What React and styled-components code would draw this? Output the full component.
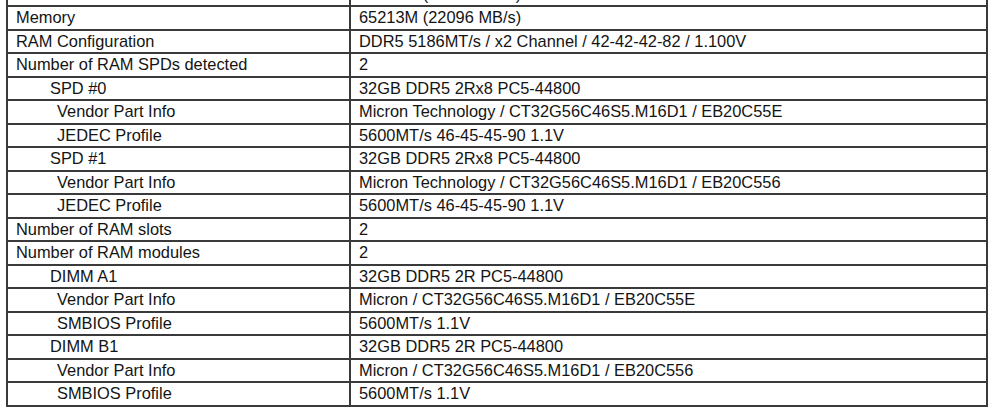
import React from "react";
import styled, { createGlobalStyle } from "styled-components";

const GlobalStyle = createGlobalStyle`
  html, body {
    margin: 0;
    padding: 0;
    background: #ffffff;
  }
  body {
    font-family: "Liberation Sans", Arial, sans-serif;
    overflow: hidden;
  }
`;

const rows = [
  { label: "", value: "65213M (22096 MB/s)" },
  { label: "Memory", value: "65213M (22096 MB/s)" },
  { label: "RAM Configuration", value: "DDR5 5186MT/s / x2 Channel / 42-42-42-82 / 1.100V" },
  { label: "Number of RAM SPDs detected", value: "2" },
  { label: "SPD #0", value: "32GB DDR5 2Rx8 PC5-44800", level: 1 },
  { label: "Vendor Part Info", value: "Micron Technology / CT32G56C46S5.M16D1 / EB20C55E", level: 2 },
  { label: "JEDEC Profile", value: "5600MT/s 46-45-45-90 1.1V", level: 2 },
  { label: "SPD #1", value: "32GB DDR5 2Rx8 PC5-44800", level: 1 },
  { label: "Vendor Part Info", value: "Micron Technology / CT32G56C46S5.M16D1 / EB20C556", level: 2 },
  { label: "JEDEC Profile", value: "5600MT/s 46-45-45-90 1.1V", level: 2 },
  { label: "Number of RAM slots", value: "2" },
  { label: "Number of RAM modules", value: "2" },
  { label: "DIMM A1", value: "32GB DDR5 2R PC5-44800", level: 1 },
  { label: "Vendor Part Info", value: "Micron / CT32G56C46S5.M16D1 / EB20C55E", level: 2 },
  { label: "SMBIOS Profile", value: "5600MT/s 1.1V", level: 2 },
  { label: "DIMM B1", value: "32GB DDR5 2R PC5-44800", level: 1 },
  { label: "Vendor Part Info", value: "Micron / CT32G56C46S5.M16D1 / EB20C556", level: 2 },
  { label: "SMBIOS Profile", value: "5600MT/s 1.1V", level: 2 },
];

const indents = [8, 42, 49];

const Table = styled.div`
  width: 982px;
  margin: -18.5px 0 0 6px;
  border: 2px solid #3a3a3a;
  border-top: none;
  box-sizing: border-box;
`;

const Row = styled.div`
  display: flex;
  height: 23.53px;
  border-top: 2px solid #3a3a3a;
  box-sizing: border-box;
`;

const Label = styled.div`
  width: 341px;
  flex-shrink: 0;
  padding-left: ${(p) => indents[p.$level || 0]}px;
  box-sizing: border-box;
  font-size: 16.4px;
  line-height: 21.5px;
  color: #141414;
  white-space: nowrap;
`;

const Value = styled.div`
  flex: 1;
  border-left: 2px solid #3a3a3a;
  padding-left: 8px;
  font-size: 16.4px;
  line-height: 21.5px;
  color: #141414;
  white-space: nowrap;
`;

export default function App() {
  return (
    <>
      <GlobalStyle />
      <Table>
        {rows.map((r, i) => (
          <Row key={i}>
            <Label $level={r.level}>{r.label}</Label>
            <Value>{r.value}</Value>
          </Row>
        ))}
      </Table>
    </>
  );
}
